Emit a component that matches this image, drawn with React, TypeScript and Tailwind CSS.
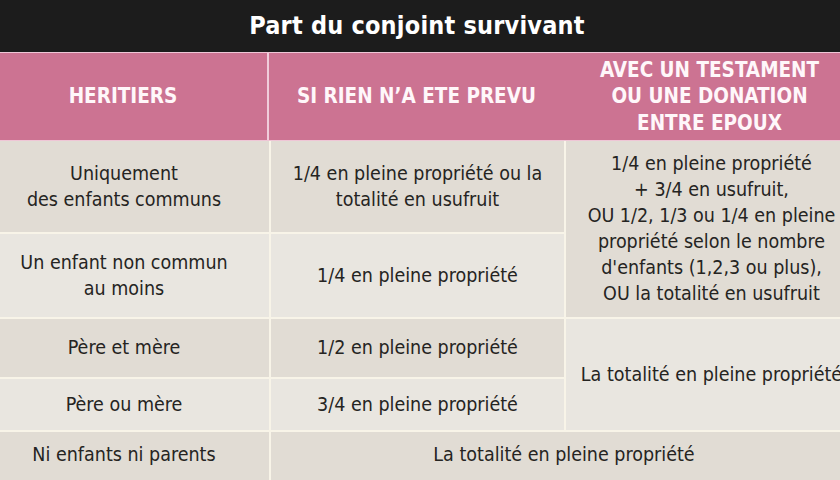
import React from "react";

const FONT = "font-['DejaVu_Sans_Condensed','DejaVu_Sans',sans-serif] font-stretch-condensed";

function Cell({
  children,
  tone,
  className = "",
}: {
  children: React.ReactNode;
  tone: "dark" | "light";
  className?: string;
}) {
  return (
    <div
      className={`flex items-center justify-center text-center text-[19.5px] leading-[26px] text-[#252422] ${
        tone === "dark" ? "bg-[#e1dcd4]" : "bg-[#e9e6e0]"
      } ${className}`}
    >
      <div>{children}</div>
    </div>
  );
}

export default function App() {
  return (
    <div className={`w-[840px] h-[480px] overflow-hidden bg-[#1c1c1c] ${FONT}`}>
      <div className="-ml-[21px] w-[876px]">
        <div className="h-[52px] flex items-center justify-center text-white font-bold text-[25px] tracking-[0.2px]">
          Part du conjoint survivant
        </div>
        <div className="h-[89px] border-y border-[#efc6d6] bg-[#cc7392] grid grid-cols-[290px_295px_291px] text-[#fff7fa] font-bold text-[20.5px] leading-[26.5px] text-center">
          <div className="flex items-center justify-center border-r-2 border-[#f0cddb]">HERITIERS</div>
          <div className="flex items-center justify-center">SI RIEN N’A ETE PREVU</div>
          <div className="flex items-center justify-center">
            <div>
              AVEC UN TESTAMENT
              <br />
              OU UNE DONATION
              <br />
              ENTRE EPOUX
            </div>
          </div>
        </div>
        <div className="grid grid-cols-[290px_293px_291px] grid-rows-[91px_83px_58px_51px_60px] gap-[2px] bg-[#f8f4e8]">
          <Cell tone="dark">
            Uniquement
            <br />
            des enfants communs
          </Cell>
          <Cell tone="dark">
            1/4 en pleine propriété ou la
            <br />
            totalité en usufruit
          </Cell>
          <Cell tone="dark" className="row-span-2">
            1/4 en pleine propriété
            <br />+ 3/4 en usufruit,
            <br />
            OU 1/2, 1/3 ou 1/4 en pleine
            <br />
            propriété selon le nombre
            <br />
            d'enfants (1,2,3 ou plus),
            <br />
            OU la totalité en usufruit
          </Cell>
          <Cell tone="light">
            Un enfant non commun
            <br />
            au moins
          </Cell>
          <Cell tone="light">1/4 en pleine propriété</Cell>
          <Cell tone="dark">Père et mère</Cell>
          <Cell tone="dark">1/2 en pleine propriété</Cell>
          <Cell tone="light" className="row-span-2">
            La totalité en pleine propriété
          </Cell>
          <Cell tone="light">Père ou mère</Cell>
          <Cell tone="light">3/4 en pleine propriété</Cell>
          <Cell tone="dark" className="items-start pt-[10px]">
            Ni enfants ni parents
          </Cell>
          <Cell tone="dark" className="col-span-2 items-start pt-[10px]">
            La totalité en pleine propriété
          </Cell>
        </div>
      </div>
    </div>
  );
}
